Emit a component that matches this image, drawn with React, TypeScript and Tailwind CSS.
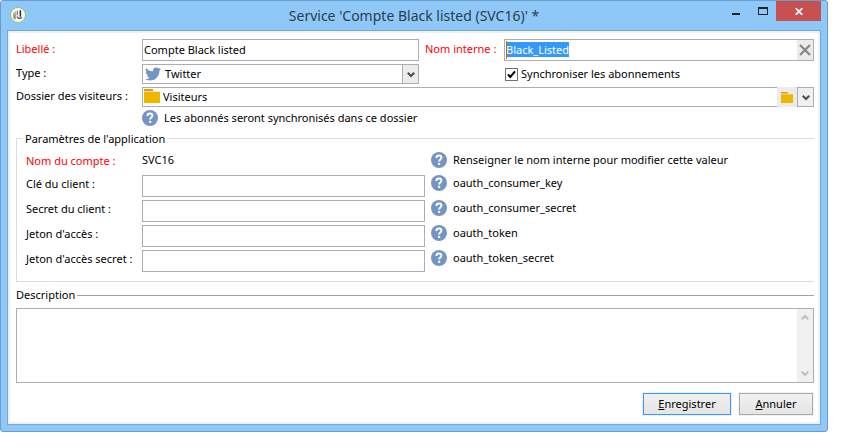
import { useEffect, useRef } from 'react';
import type { ReactNode } from 'react';

const FIELD = 'h-[22px] w-full border border-[#abadb3] bg-white px-px pb-0.5 leading-[18px] outline-none';

function HelpIcon() {
  return (
    <svg className="size-4 shrink-0" viewBox="0 0 16 16" aria-hidden="true">
      <circle cx="8" cy="8" r="8" fill="#7495c4" />
      <path d="M5.4 5.9C5.4 4.2 6.5 3.5 8 3.5s2.4 .8 2.4 2c0 1.1-.6 1.6-1.2 2.1-.8 .5-1.1 .9-1.1 1.9" fill="none" stroke="#fff" strokeWidth="1.9" />
      <rect x="7.1" y="10.8" width="2.1" height="2.1" fill="#fff" />
    </svg>
  );
}

function FolderIcon({ className }: { className: string }) {
  return (
    <svg className={className} viewBox="0 0 16 14" preserveAspectRatio="none" aria-hidden="true">
      <path d="M0 0h9v2h7v1H0z" fill="#fbe3b8" />
      <path d="M0 0h9v2H0z" fill="#ef8f1c" />
      <rect y="3" width="16" height="11" fill="#edb700" />
    </svg>
  );
}

function TwitterIcon() {
  return (
    <svg className="pointer-events-none absolute top-0.5 left-[3px] h-4 w-4" viewBox="0 0 24 24" preserveAspectRatio="none" aria-hidden="true">
      <path
        fill="#7495c4"
        d="M23.95 4.57a10 10 0 0 1-2.82.77 4.96 4.96 0 0 0 2.16-2.72c-.95.56-2 .96-3.13 1.19a4.92 4.92 0 0 0-8.38 4.48C7.69 8.1 4.07 6.13 1.64 3.16a4.82 4.82 0 0 0-.67 2.48c0 1.71.87 3.21 2.19 4.1a4.9 4.9 0 0 1-2.23-.62v.06a4.92 4.92 0 0 0 3.95 4.83 5 5 0 0 1-2.21.08 4.94 4.94 0 0 0 4.6 3.42A9.87 9.87 0 0 1 0 19.54a13.99 13.99 0 0 0 7.55 2.21c9.05 0 14-7.5 14-13.99 0-.21 0-.42-.02-.63a9.94 9.94 0 0 0 2.46-2.55z"
      />
    </svg>
  );
}

function Chevron({ up = false, color = '#505050' }: { up?: boolean; color?: string }) {
  return (
    <svg className="h-[7px] w-2" viewBox="0 0 8 7" aria-hidden="true">
      <path d={up ? 'M.7 5.3 4 2l3.3 3.3' : 'M.7 1.7 4 5l3.3-3.3'} fill="none" stroke={color} strokeWidth="2.2" />
    </svg>
  );
}

function HelpText({ children }: { children: ReactNode }) {
  return (
    <div className="flex items-start gap-1.5">
      <HelpIcon />
      <span className="leading-4">{children}</span>
    </div>
  );
}

function TitleBar() {
  return (
    <header className="grid h-[29px] grid-cols-[1fr_auto_1fr] bg-[#8dc8f9]">
      <svg className="mt-1.5 ml-[9px] size-4" viewBox="0 0 16 16" aria-hidden="true">
        <circle cx="8" cy="8" r="7.5" fill="#f8f9f5" stroke="#a3c069" />
        <path d="M2.8 6.8 6.2 3.6v8.2L4.8 12.8l-2-1.6z" fill="#b3b5b0" />
        <path d="M4.2 8h1v3.5h-1z" fill="#777" />
        <path d="M9.6 3.2h1.5v6.6H9.6z" fill="#2c2e2e" />
        <path d="M7 8.8c.8 2 2.4 2.4 4.6 1.2l.8 .8c-2 1.8-4.6 1.6-5.6-.6z" fill="#4a4c4a" />
        <path d="M6.8 4 8 3.2v5H6.8z" fill="#7a7c7a" />
      </svg>
      <h1 className="text-[14px] leading-[29px] text-[#2c3c4b]">Service 'Compte Black listed (SVC16)' *</h1>
      <div className="mr-1.5 flex items-start justify-end">
        <button type="button" aria-label="Réduire" className="flex h-5 w-[27px] items-start justify-center pt-3">
          <span className="h-0.5 w-2 bg-[#222]" />
        </button>
        <button type="button" aria-label="Agrandir" className="flex h-5 w-[27px] items-start justify-center pt-1.5">
          <span className="h-2 w-2.5 border border-t-2 border-[#222]" />
        </button>
        <button type="button" aria-label="Fermer" className="flex h-5 w-[45px] items-center justify-center bg-[#c75050]">
          <svg className="h-[7px] w-2" viewBox="0 0 8 7" aria-hidden="true">
            <path d="M.7.2l6.6 6.6M7.3.2.7 6.8" stroke="#fff" strokeWidth="1.8" />
          </svg>
        </button>
      </div>
    </header>
  );
}

const PARAMS = [
  { id: 'consumer-key', label: 'Clé du client :', help: 'oauth_consumer_key' },
  { id: 'consumer-secret', label: 'Secret du client :', help: 'oauth_consumer_secret' },
  { id: 'token', label: "Jeton d'accès :", help: 'oauth_token' },
  { id: 'token-secret', label: "Jeton d'accès secret :", help: 'oauth_token_secret' },
];

export default function App() {
  const nameRef = useRef<HTMLInputElement>(null);
  useEffect(() => {
    nameRef.current?.focus();
    nameRef.current?.select();
  }, []);

  return (
    <div className="bg-white pr-[13px] font-['Noto_Sans','Open_Sans',sans-serif] text-[11px] leading-4 text-black">
      <main className="overflow-hidden rounded-[3px] border border-[#6c9cc9] bg-[#8dc8f9]">
        <TitleBar />
        <form className="mx-1.5 mb-1.5 border border-[#76a8d6] bg-[#f0f0f0] p-0.5" onSubmit={(e) => e.preventDefault()}>
          <div className="bg-white pt-1.5 pr-1 pb-1.5 pl-1.5">
            <div className="grid grid-cols-[126px_277px_85px_1fr] gap-y-[3px]">
              <label htmlFor="label" className="pt-0.5 text-[#f00]">Libellé :</label>
              <input id="label" className={FIELD} defaultValue="Compte Black listed" />
              <label htmlFor="name" className="pt-0.5 pl-1.5 text-[#f00]">Nom interne :</label>
              <div className="relative flex border border-[#abadb3]">
                <input
                  ref={nameRef}
                  id="name"
                  className="h-5 min-w-0 flex-1 pb-0.5 pl-px leading-[18px] caret-transparent outline-none selection:bg-[#3399ff] selection:text-white"
                  defaultValue="Black_Listed"
                />
                <span className="absolute top-px left-px h-[18px] w-px bg-[#cc6600]" />
                <button type="button" aria-label="Effacer" className="flex w-4 items-center justify-center bg-[#ebebeb]">
                  <svg className="size-3" viewBox="0 0 12 12" aria-hidden="true">
                    <path d="M1 1l10 10M11 1 1 11" stroke="#858585" strokeWidth="2.2" />
                  </svg>
                </button>
              </div>

              <label htmlFor="type" className="pt-px">Type :</label>
              <div className="relative">
                <TwitterIcon />
                <select id="type" className="block h-5 w-full appearance-none border border-[#abadb3] pl-[22px] leading-[18px] outline-none">
                  <option>Twitter</option>
                </select>
                <span className="pointer-events-none absolute top-px right-px bottom-px flex w-4 items-center justify-center border-l border-[#abadb3] bg-[#ececec]">
                  <Chevron />
                </span>
              </div>
              <label className="col-start-4 flex items-center gap-[3px] pl-px">
                <span className="relative size-[13px]">
                  <input type="checkbox" defaultChecked className="block size-[13px] appearance-none border border-[#707070] bg-white" />
                  <svg className="pointer-events-none absolute inset-0 size-[13px]" viewBox="0 0 13 13" aria-hidden="true">
                    <path d="M3 6.4 5.3 9 10 3.4" fill="none" stroke="#000" strokeWidth="2" />
                  </svg>
                </span>
                Synchroniser les abonnements
              </label>
            </div>

            <div className="mt-[3px] grid grid-cols-[126px_1fr] gap-y-[3px]">
              <label htmlFor="folder" className="pt-px whitespace-nowrap">Dossier des visiteurs :</label>
              <div className="flex h-5">
                <div className="relative flex-1">
                  <FolderIcon className="pointer-events-none absolute top-0.5 left-0.5 h-3.5 w-4" />
                  <input id="folder" defaultValue="Visiteurs" className="block h-5 w-full border border-r-0 border-[#abadb3] pb-0.5 pl-5 leading-4 outline-none" />
                </div>
                <button type="button" aria-label="Choisir un dossier" className="flex w-5 items-center justify-center bg-[#ebebeb]">
                  <FolderIcon className="h-[11px] w-3" />
                </button>
                <button type="button" aria-label="Dérouler" className="flex w-[17px] items-center justify-center border border-[#abadb3] bg-[#f0f0f0]">
                  <Chevron />
                </button>
              </div>
              <div className="col-start-2">
                <HelpText>Les abonnés seront synchronisés dans ce dossier</HelpText>
              </div>
            </div>

            <fieldset className="mt-1 border border-r-0 border-[#dcdcdc] pb-[9px]">
              <legend className="ml-1.5 px-0.5 leading-[17px]">Paramètres de l'application</legend>
              <div className="mt-[5px] grid grid-cols-[116px_283px_1fr] gap-y-[3px] pl-[9px]">
                <span className="h-5 pt-px text-[#f00]">Nom du compte :</span>
                <span>SVC16</span>
                <div className="pl-1.5"><HelpText>Renseigner le nom interne pour modifier cette valeur</HelpText></div>
                {PARAMS.map((p) => (
                  <div key={p.id} className="contents">
                    <label htmlFor={p.id} className="pt-px whitespace-nowrap">{p.label}</label>
                    <input id={p.id} className={FIELD} />
                    <div className="pl-1.5"><HelpText>{p.help}</HelpText></div>
                  </div>
                ))}
              </div>
            </fieldset>

            <div className="mt-[5px] flex items-center gap-0.5">
              <label htmlFor="description">Description</label>
              <span className="h-px flex-1 bg-[#a0a0a0]" />
            </div>
            <div className="mt-[5px] flex h-[75px] border border-[#abadb3]">
              <textarea id="description" className="min-w-0 flex-1 resize-none overflow-hidden p-1 outline-none" />
              <div className="flex w-4 flex-col justify-between bg-[#f0f0f0] py-[5px]">
                <button type="button" aria-label="Défiler vers le haut" className="flex justify-center"><Chevron up color="#bfbfbf" /></button>
                <button type="button" aria-label="Défiler vers le bas" className="flex justify-center"><Chevron color="#bfbfbf" /></button>
              </div>
            </div>

            <div className="mt-[9px] flex justify-end gap-1.5">
              <button type="submit" className="h-6 w-[90px] border border-[#f0f0f0]">
                <span className="block h-[22px] border border-[#3399ff] bg-linear-to-b from-[#f0f0f0] to-[#e5e5e5] leading-5"><u>E</u>nregistrer</span>
              </button>
              <button type="button" className="h-6 w-[76px] border border-[#f0f0f0]">
                <span className="block h-[22px] border border-[#acacac] bg-linear-to-b from-[#f0f0f0] to-[#e5e5e5] leading-5"><u>A</u>nnuler</span>
              </button>
            </div>
          </div>
        </form>
      </main>
    </div>
  );
}
